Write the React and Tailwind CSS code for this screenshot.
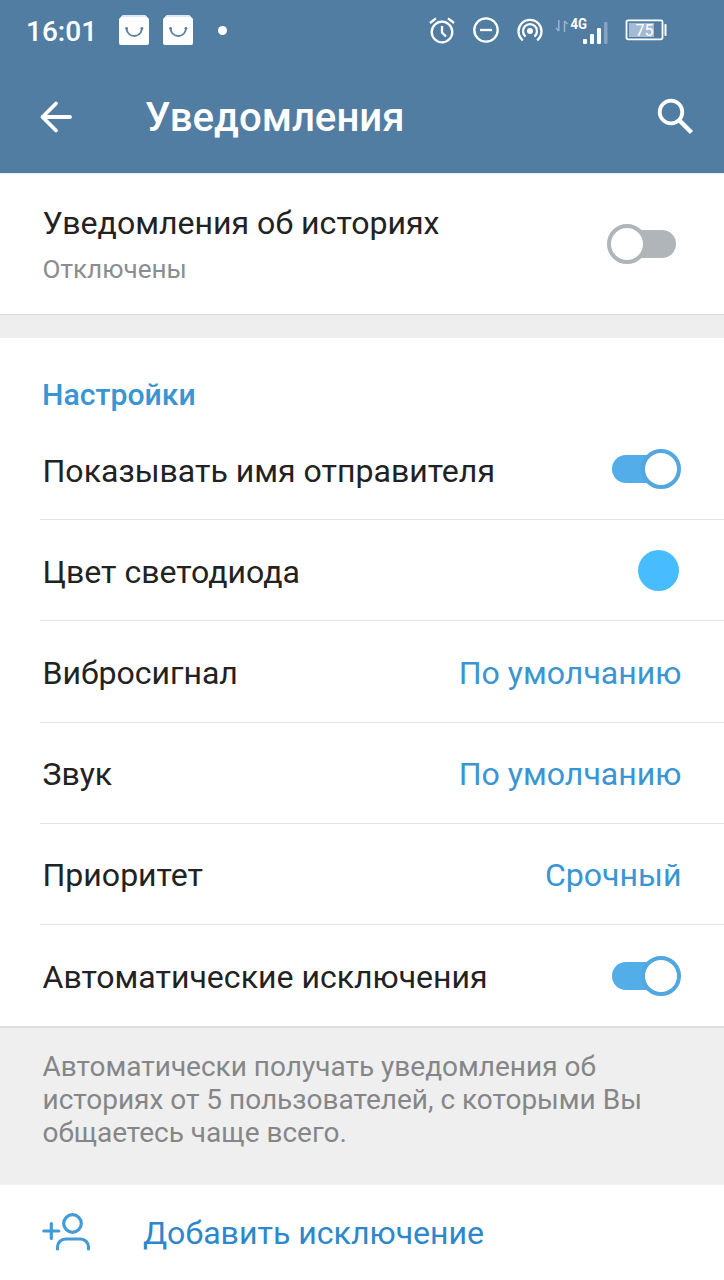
import clsx from 'clsx';

const BagIcon = () => (
  <svg width="30" height="30" viewBox="0 0 30 30" fill="none">
    <path d="M4 0h22l4 4v24a2 2 0 0 1-2 2H2a2 2 0 0 1-2-2V4z" fill="#fff" />
    <path d="M4 0h22l2 2H2z" fill="#dfe8fa" />
    <path d="M7.5 13.5c1 10 14.5 10 15.5 0" stroke="#5b7f9c" strokeWidth="1.9" />
    <circle cx="7.6" cy="13.4" r="1.4" fill="#5b7f9c" />
    <circle cx="22.9" cy="13.4" r="1.4" fill="#5b7f9c" />
  </svg>
);

const AlarmIcon = () => (
  <svg width="26" height="27" viewBox="0 0 26 27" fill="none" stroke="#fff" strokeWidth="2.3">
    <circle cx="13" cy="15" r="10.3" />
    <path d="M13 9v6.5l4 4M1 6l6-4.7M25 6l-6-4.7" />
  </svg>
);

const DoNotDisturbIcon = () => (
  <svg width="26" height="26" viewBox="0 0 26 26" fill="none" stroke="#fff" strokeWidth="2.3">
    <circle cx="13" cy="13" r="11.7" />
    <path d="M7 13h12" />
  </svg>
);

const HotspotIcon = () => (
  <svg width="26" height="26" viewBox="0 0 26 26" fill="none" stroke="#fff" strokeWidth="2.3">
    <circle cx="13" cy="14" r="3" fill="#fff" stroke="none" />
    <path d="M5.8 23.3a11.5 11.5 0 1 1 14.4 0" />
    <path d="M8.6 19.5a7 7 0 1 1 8.8 0" />
  </svg>
);

const SignalIcon = () => (
  <svg width="54" height="29" viewBox="0 0 54 29" fill="none">
    <path d="M3.8 4v11M1 12l2.8 3M9.5 16V5M12.5 8l-3-3" stroke="#9db4ca" strokeWidth="1.5" />
    <text x="15.5" y="12.6" fill="#fff" fontSize="15" fontWeight="700" textLength="16.5" lengthAdjust="spacingAndGlyphs">
      4G
    </text>
    <rect x="28" y="23" width="4" height="5" rx="1" fill="#fff" />
    <rect x="35" y="18" width="4" height="10" rx="1" fill="#fff" />
    <rect x="42" y="12" width="4" height="16" rx="1" fill="#fff" />
    <rect x="49" y="6" width="3.5" height="22" rx="1" fill="#86a4bf" />
  </svg>
);

const BatteryIcon = () => (
  <svg width="43" height="22" viewBox="0 0 43 22" fill="none">
    <rect x="1.5" y="1.3" width="36" height="19" rx="1.5" stroke="#fff" strokeWidth="1.8" />
    <rect x="4" y="4" width="25" height="14" fill="#a4bcd3" />
    <rect x="39.5" y="5" width="2" height="12" rx="0.8" fill="#fff" />
    <text x="19.5" y="16.6" fill="#fff" fontSize="16" textAnchor="middle">
      75
    </text>
  </svg>
);

const BackIcon = () => (
  <svg width="34" height="34" viewBox="0 0 34 34" fill="none" stroke="#fff" strokeWidth="3.8" strokeLinecap="round" strokeLinejoin="round">
    <path d="M31 17H3.5M17 3.5L3.5 17 17 30.5" />
  </svg>
);

const SearchIcon = () => (
  <svg width="38" height="38" viewBox="0 0 38 38" fill="none" stroke="#fff">
    <circle cx="15" cy="14" r="11.3" strokeWidth="3.8" />
    <path d="M23 22L35.5 34.5" strokeWidth="4.5" />
  </svg>
);

const AddUserIcon = () => (
  <svg width="50" height="40" viewBox="0 0 50 40" fill="none" stroke="#429ad6" strokeWidth="3.2" strokeLinecap="round">
    <circle cx="30.5" cy="10.5" r="8.8" />
    <path d="M15.5 36v-2a8 8 0 0 1 8-8h15a8 8 0 0 1 8 8v2M1.8 18h15M9.3 10.5v15" />
  </svg>
);

const Toggle = ({ on }) => (
  <span className={clsx('relative flex h-10 w-[69px] shrink-0 items-center', on ? 'mr-px' : 'mr-[5px]')}>
    <span className={clsx('h-7 w-[60px] rounded-full', on ? 'bg-[#52ade9]' : 'ml-[9px] bg-[#b0b5ba]')} />
    <span
      className={clsx(
        'absolute top-0 size-10 rounded-full border-4 bg-white',
        on ? 'right-0 border-[#52a7df]' : 'left-0 border-[#b0b5ba]'
      )}
    />
  </span>
);

const Row = ({ label, children, last }) => (
  <div
    className={clsx(
      'ml-10 flex h-[101.2px] items-center justify-between pr-[42.5px] pl-[2.5px]',
      !last && 'border-b border-[#e4e4e4]'
    )}
  >
    <span className="pt-[3px] text-[32.05px] leading-10 text-[#222]">{label}</span>
    {children}
  </div>
);

const Value = ({ children }) => <span className="pt-[3px] text-[32.1px] leading-10 text-[#3995d4]">{children}</span>;

export default function App() {
  return (
    <div className="flex h-[1280px] w-[724px] flex-col overflow-hidden bg-white font-[Roboto,sans-serif] whitespace-nowrap">
      <header className="h-[173px] shrink-0 bg-[#527da3] text-white">
        <div className="flex h-[60px] items-center">
          <span className="ml-[26px] w-[93px] pt-[3px] text-[28px] font-medium">16:01</span>
          <BagIcon />
          <span className="ml-3.5 flex">
            <BagIcon />
          </span>
          <span className="ml-[25px] size-[9px] rounded-full bg-white" />
          <div className="ml-[202px] flex items-center">
            <AlarmIcon />
            <span className="ml-[18px]">
              <DoNotDisturbIcon />
            </span>
            <span className="ml-[18px]">
              <HotspotIcon />
            </span>
            <span className="ml-3">
              <SignalIcon />
            </span>
            <span className="ml-4">
              <BatteryIcon />
            </span>
          </div>
        </div>
        <div className="flex h-[113px] items-center pr-[30px] pl-[39px]">
          <BackIcon />
          <h1 className="ml-[72px] flex-1 pt-0.5 text-[40.2px] leading-[50px] font-medium">Уведомления</h1>
          <SearchIcon />
        </div>
      </header>

      <section className="flex h-[141px] shrink-0 items-center justify-between border-t border-[#e9edf2] pr-[43px] pl-[42.5px]">
        <div className="pt-px">
          <div className="text-[32.1px] leading-10 text-[#222]">Уведомления об историях</div>
          <div className="mt-2 text-[26.1px] leading-9 text-[#8a8d91]">Отключены</div>
        </div>
        <Toggle />
      </section>

      <div className="h-6 shrink-0 border-t border-[#dcdcdc] bg-[#eee]" />

      <section className="h-[688px] shrink-0">
        <h2 className="h-[81px] pt-9 pl-[42px] text-[30.2px] leading-[42px] font-medium text-[#3995d4]">Настройки</h2>
        <Row label="Показывать имя отправителя">
          <Toggle on />
        </Row>
        <Row label="Цвет светодиода">
          <span className="mr-[3px] size-[41px] rounded-full bg-[#47bdff]" />
        </Row>
        <Row label="Вибросигнал">
          <Value>По умолчанию</Value>
        </Row>
        <Row label="Звук">
          <Value>По умолчанию</Value>
        </Row>
        <Row label="Приоритет">
          <Value>Срочный</Value>
        </Row>
        <Row label="Автоматические исключения" last>
          <Toggle on />
        </Row>
      </section>

      <p className="h-[159px] shrink-0 border-t-2 border-[#e0e0e0] bg-[#efefef] pt-[22px] pl-[42.5px] text-[28px] leading-[33px] text-[#858688]">
        Автоматически получать уведомления об
        <br />
        историях от 5 пользователей, с которыми Вы
        <br />
        общаетесь чаще всего.
      </p>

      <button className="flex h-[95px] shrink-0 items-center pl-[42px] text-left">
        <AddUserIcon />
        <span className="ml-[51px] pt-px text-[32.1px] text-[#2c87cc]">Добавить исключение</span>
      </button>
    </div>
  );
}
